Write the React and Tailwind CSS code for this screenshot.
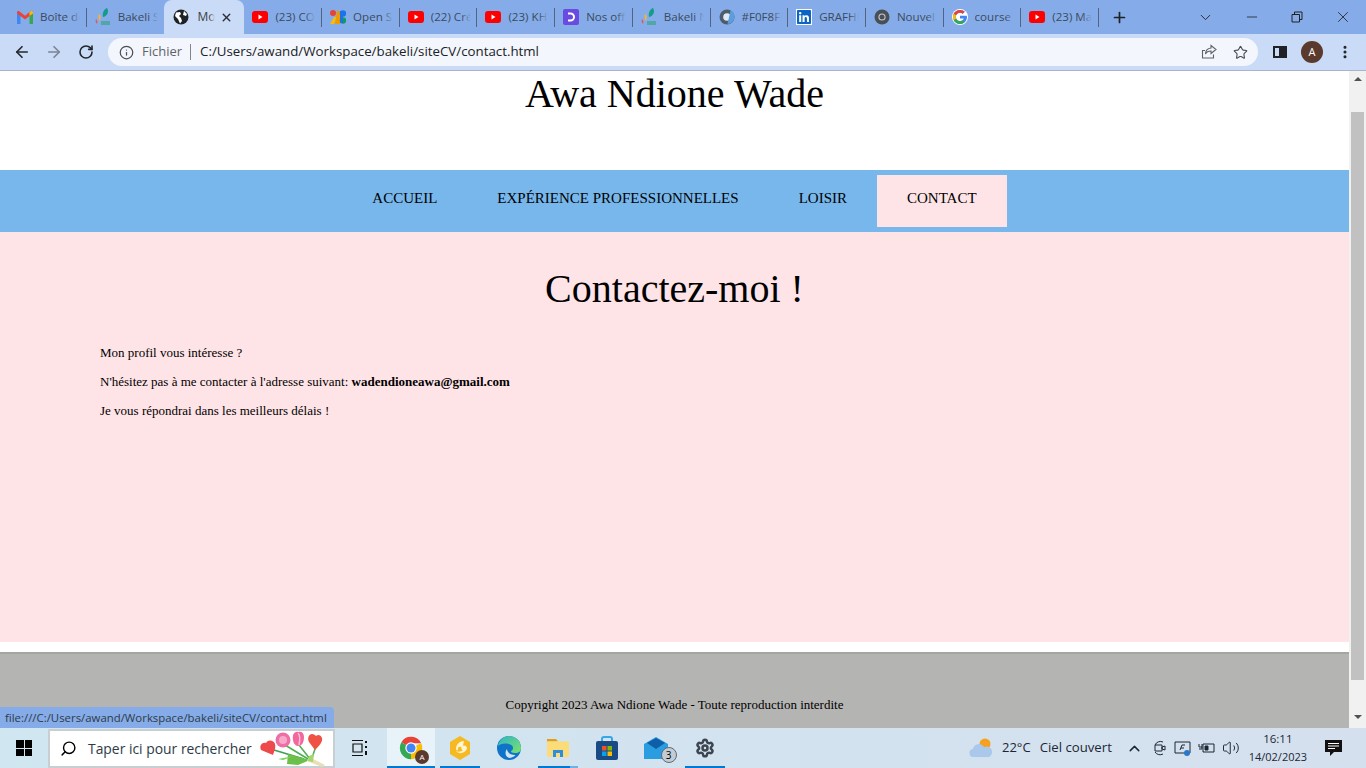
import React from "react";
import { FaLinkedin } from "react-icons/fa";
import { ArrowLeft, ArrowRight, RotateCw, Info, Star, Plus, X, ChevronDown, ChevronUp, Minus, Search, EllipsisVertical, Settings, Volume2 } from "lucide-react";

const ui = "font-['Open_Sans','Noto_Sans',sans-serif]";

function Gmail() {
  return (
    <svg width="16" height="13" viewBox="0 0 16 13">
      <path d="M0 2v11h3.500V4.500z" fill="#4285f4" />
      <path d="M16 2v11h-3.500V4.500z" fill="#34a853" />
      <path d="M0 1.500C0 .2 1.500-.4 2.500.4L8 4.800 13.500.4c1-.8 2.500-.2 2.500 1.100v1L12.500 5 8 8.600 3.500 5 0 2.500z" fill="#ea4335" />
      <path d="M12.500 1.600 13.500.4c1-.8 2.500-.2 2.500 1.100v1L12.500 5z" fill="#fbbc04" />
    </svg>
  );
}

function Bakeli() {
  return (
    <svg width="16" height="20" viewBox="0 0 16 20">
      <path d="M8 10C7 6 9 2 12 1c2 3 1 8-4 9z" fill="#139c8c" />
      <path d="M4 7c2 1 2 4 1 7-2-2-2-5-1-7z" fill="#f2b43a" />
      <path d="M1 12c1 1 2 3 1 5-1-1-2-3-1-5z" fill="#e2574c" />
      <path d="M6 14h9v4H6z" fill="#3aa58c" opacity="0.7" />
    </svg>
  );
}

function Globe() {
  return (
    <svg width="16" height="16" viewBox="0 0 16 16">
      <circle cx="8" cy="8" r="7.500" fill="#1f2328" />
      <path d="M3 3.500 7 3l1 2-2 2 2 2 1 3-2 2.500L5 10 2 7zM11 2l3 3-1 2-3-1z" fill="#fff" />
    </svg>
  );
}

function Youtube() {
  return (
    <svg width="16" height="12" viewBox="0 0 16 12">
      <rect width="16" height="12" rx="3" fill="#f00" />
      <path d="M6.500 3.500v5l4-2.500z" fill="#fff" />
    </svg>
  );
}

function OpenS() {
  return (
    <svg width="16" height="14" viewBox="0 0 16 14">
      <circle cx="3" cy="3" r="3" fill="#e94235" />
      <path d="M0 14 4 7h3l-3 7z" fill="#fbbc04" />
      <path d="M7 1h3v13H5z" fill="#f29900" />
      <circle cx="13" cy="3.500" r="3.200" fill="#1a73e8" />
      <circle cx="13" cy="10.500" r="3.200" fill="#0f9d58" />
      <path d="M10 1h3v12h-3z" fill="#1a73e8" />
    </svg>
  );
}

function Nos() {
  return (
    <svg width="16" height="16" viewBox="0 0 16 16">
      <rect width="16" height="16" rx="2" fill="#6a4be0" />
      <path d="M5 3.500h2.500a4.500 4.500 0 0 1 0 9H5v-2h2.500a2.500 2.500 0 0 0 0-5H5z" fill="#fff" />
    </svg>
  );
}

function Hex() {
  return (
    <svg width="16" height="16" viewBox="0 0 16 16">
      <circle cx="8" cy="8" r="7.500" fill="#4e5b6a" />
      <circle cx="8" cy="8" r="3.800" fill="#dfe8f6" />
      <path d="M8.500 15 11.500 1.500c3 1 4 4 4 6.500 0 3.500-3 7-7 7z" fill="#5a9ee0" />
    </svg>
  );
}

function Chrome({ size = 16, grey }) {
  if (grey) {
    return (
      <svg width={size} height={size} viewBox="0 0 16 16">
        <circle cx="8" cy="8" r="7.500" fill="#4a4f55" />
        <circle cx="8" cy="8" r="3.600" fill="#c3cad4" />
        <circle cx="8" cy="8" r="2.500" fill="#4a4f55" />
      </svg>
    );
  }
  return (
    <svg width={size} height={size} viewBox="0 0 16 16">
      <path d="M8 8 1.600 4.200A7.500 7.500 0 0 1 14.800 4.800H8z" fill="#ea4335" />
      <path d="M8 8 14.800 4.800A7.500 7.500 0 0 1 8 15.500z" fill="#fbbc04" />
      <path d="M8 8v7.500A7.500 7.500 0 0 1 1.600 4.200z" fill="#34a853" />
      <circle cx="8" cy="8" r="3.800" fill="#fff" />
      <circle cx="8" cy="8" r="3" fill="#4285f4" />
    </svg>
  );
}

function Google() {
  return (
    <svg width="16" height="16" viewBox="0 0 48 48" className="rounded-full bg-white">
      <path d="M43.600 20H24v8.500h11.200C34 33.500 29.600 36.500 24 36.500c-6.900 0-12.500-5.600-12.500-12.500S17.100 11.500 24 11.500c3.100 0 6 1.100 8.200 3l6-6C34.500 5.100 29.500 3 24 3 12.400 3 3 12.400 3 24s9.400 21 21 21 21-9.400 21-21c0-1.400-.2-2.700-1.400-4z" fill="#4285f4" />
      <path d="M5 14l7 5c1.900-4.500 6.500-7.500 12-7.500 3.100 0 6 1.100 8.200 3l6-6C34.500 5.100 29.500 3 24 3 15.900 3 8.900 7.500 5 14z" fill="#ea4335" />
      <path d="M24 45c5.400 0 10.300-2 14-5.400l-6.500-5.500c-2 1.500-4.600 2.400-7.500 2.400-5.400 0-10-3.500-11.700-8.300l-7 5.400C8.700 40.400 15.800 45 24 45z" fill="#34a853" />
      <path d="M12.300 28.700a12.600 12.600 0 0 1 0-9.500l-7-5.300a21 21 0 0 0 0 20.200z" fill="#fbbc04" />
    </svg>
  );
}

const tabs = [
  { icon: <Gmail />, label: "Boîte de réception" },
  { icon: <Bakeli />, label: "Bakeli SI" },
  { icon: <Globe />, label: "Mon CV", active: true },
  { icon: <Youtube />, label: "(23) CODE" },
  { icon: <OpenS />, label: "Open Sans" },
  { icon: <Youtube />, label: "(22) Créer" },
  { icon: <Youtube />, label: "(23) KHALIL" },
  { icon: <Nos />, label: "Nos offres" },
  { icon: <Bakeli />, label: "Bakeli Nos" },
  { icon: <Hex />, label: "#F0F8FF" },
  { icon: <FaLinkedin className="bg-white text-[#0a66c2]" size={16} />, label: "GRAFHIC" },
  { icon: <Chrome grey />, label: "Nouvel" },
  { icon: <Google />, label: "course" },
  { icon: <Youtube />, label: "(23) Ma" },
];

function Tab({ tab, hideDivider }) {
  if (tab.active) {
    return (
      <div className="relative flex h-[34px] w-[80px] shrink-0 items-center rounded-t-[8px] bg-[#c9dbf7] pl-[9px]">
        <span className="flex w-[16px] justify-center">{tab.icon}</span>
        <span className="relative ml-[8px] w-[18px] overflow-hidden whitespace-nowrap text-[12px] text-[#3c4043]">
          Mon CV
          <span className="absolute right-0 top-0 h-full w-[6px] bg-gradient-to-r from-transparent to-[#c9dbf7]" />
        </span>
        <X size={13} strokeWidth={2.6} className="ml-[5px] text-[#2b2f33]" />
      </div>
    );
  }
  return (
    <div className="relative flex h-[34px] w-[77.7px] shrink-0 items-center pl-[8px]">
      <span className="flex w-[16px] justify-center">{tab.icon}</span>
      <span className="relative ml-[7px] w-[40px] overflow-hidden whitespace-nowrap text-[11.600px] text-[#3c4a5e]">
        {tab.label}
        <span className="absolute right-0 top-0 h-full w-[10px] bg-gradient-to-r from-transparent to-[#85ace8]" />
      </span>
      {!hideDivider && <span className="absolute right-0 top-[8px] h-[19px] w-px bg-[#54647e]" />}
    </div>
  );
}

function Toolbar() {
  return (
    <div className={`flex h-[36px] shrink-0 items-center bg-[#c9dbf7] ${ui}`}>
      <ArrowLeft size={18} strokeWidth={2.2} className="ml-[13px] text-[#23272c]" />
      <ArrowRight size={18} strokeWidth={2.2} className="ml-[14px] text-[#7b8592]" />
      <RotateCw size={16} strokeWidth={2.4} className="ml-[15px] text-[#23272c]" />
      <div className="ml-[14px] flex h-[28px] w-[1150px] items-center rounded-full bg-[#f3f7fd]">
        <Info size={15} className="ml-[11px] text-[#4a4f55]" />
        <span className="ml-[8px] text-[13px] text-[#5f6368]">Fichier</span>
        <span className="ml-[8px] h-[16px] w-px bg-[#80868b]" />
        <span className="ml-[9px] text-[13.300px] text-[#202124]">C:/Users/awand/Workspace/bakeli/siteCV/contact.html</span>
        <svg width="16" height="16" viewBox="0 0 16 16" fill="none" stroke="#5f6368" strokeWidth="1.100" className="ml-auto">
          <path d="M10 1.500 15 5.500 10 9.500V7C7 7 5.500 8 4.500 10c0-3.500 2-5.500 5.500-6zM12.500 10.500V14h-11V6.500H4" />
        </svg>
        <Star size={15} strokeWidth={1.800} className="ml-[16px] mr-[10px] text-[#4a4f55]" />
      </div>
      <div className="ml-[15px] flex h-[12px] w-[14px] justify-end border-2 border-[#202124]">
        <span className="h-full w-[6px] bg-[#202124]" />
      </div>
      <div className="ml-[14px] flex h-[22px] w-[22px] items-center justify-center rounded-full bg-[#5b3a2e] text-[11px] text-white">A</div>
      <EllipsisVertical size={16} strokeWidth={2.6} className="ml-[14px] text-[#202124]" />
    </div>
  );
}

function PageContent() {
  const serif = "font-['Liberation_Serif','Times_New_Roman',serif] text-black";
  const link = "h-[52px] px-[30px] pt-[14px] leading-[18px]";
  return (
    <div className={`min-w-0 flex-1 overflow-hidden bg-white ${serif}`}>
      <h1 className="h-[99px] text-center text-[40px] leading-[46px]">Awa Ndione Wade</h1>
      <nav className="flex h-[62px] justify-center bg-[#78b7ec] pt-[5px] text-[15px]">
        <a className={link}>ACCUEIL</a>
        <a className={link}>EXPÉRIENCE PROFESSIONNELLES</a>
        <a className={link}>LOISIR</a>
        <a className={`${link} bg-[#ffe4e7]`}>CONTACT</a>
      </nav>
      <section className="h-[410px] bg-[#ffe4e7] px-[100px] pt-[34px] text-[13px]">
        <h2 className="-mx-[100px] mb-[34px] text-center text-[40px] leading-[46px]">Contactez-moi !</h2>
        <p className="leading-[14px]">Mon profil vous intéresse ?</p>
        <p className="mt-[15px] leading-[14px]">N'hésitez pas à me contacter à l'adresse suivant: <strong>wadendioneawa@gmail.com</strong></p>
        <p className="mt-[15px] leading-[14px]">Je vous répondrai dans les meilleurs délais !</p>
      </section>
      <footer className="mt-[10px] h-[90px] border-t-2 border-[#a5a5a3] bg-[#b4b4b2] pt-[44px] text-center text-[13px] leading-[14px]">
        Copyright 2023 Awa Ndione Wade - Toute reproduction interdite
      </footer>
    </div>
  );
}

function Scrollbar() {
  return (
    <div className="flex w-[17px] shrink-0 flex-col items-center bg-[#f1f1f1]">
      <div className="mt-[6px] h-0 w-0 border-x-[4px] border-b-[4px] border-x-transparent border-b-[#505050]" />
      <div className="mt-[31px] h-[568px] w-[13px] bg-[#c1c1c1]" />
      <div className="mt-[35px] h-0 w-0 border-x-[4px] border-t-[4px] border-x-transparent border-t-[#505050]" />
    </div>
  );
}

function Bouquet() {
  return (
    <svg width="66" height="38" viewBox="5 4 66 38" className="ml-[7px]">
      <path d="M20 25 50 34" stroke="#3f9d55" strokeWidth="1.500" fill="none" />
      <path d="M31 20 54 34M45 20 56 34M61 24 58 33" stroke="#4caf50" strokeWidth="1.500" fill="none" />
      <path d="M34 29 56 35 44 40 33 39z" fill="#6cc04a" />
      <path d="M24 34 40 31 29 35z" fill="#7bcf5a" />
      <path d="M55 32 71 40 68 42 53 36z" fill="#e8dfb4" />
      <path d="M55 31 60 29 59 37 54 36z" fill="#a5d66b" />
      <path d="M19 30 7 25c-2-4 1-8 5-7 2-4 8-3 9 1 1 4-1 8-2 11z" fill="#ee4a4b" />
      <circle cx="29" cy="15" r="7.500" fill="#ee6fa6" />
      <circle cx="29" cy="15" r="4" fill="#f6a9c8" />
      <path d="M39 10c1-3 4-4 6-3 3-1 5 2 5 5 0 5-2 9-6 9-3 0-6-4-5-11z" fill="#f2679d" />
      <path d="M44 8c2 2 2 7 1 12" stroke="#fbc2d8" strokeWidth="1.500" fill="none" />
      <path d="M61 25 55 17c-2-4 0-8 3-8 2 0 3 1 4 2 2-2 5-1 6 2 1 4-3 8-7 12z" fill="#ef5245" />
    </svg>
  );
}

function TaskSlot({ children, line, active, wide, split }) {
  return (
    <div className={`relative flex h-[40px] items-center justify-center ${wide ? "w-[48px]" : "w-[49px]"} ${active ? "bg-[#e8f3f9]" : ""}`}>
      {children}
      {line && <span className={`absolute bottom-0 h-[2px] bg-[#0078d4] ${active ? "inset-x-0" : "w-[40px]"}`} />}
      {split && <span className="absolute bottom-0 right-[4px] h-[2px] w-[8px] bg-[#6fb1e6]" />}
    </div>
  );
}

function Taskbar() {
  return (
    <div className={`flex h-[40px] shrink-0 items-center bg-gradient-to-r from-[#d0e6f1] to-[#d5e0ee] text-[#1c2733] ${ui}`}>
      <div className="ml-[16px] grid h-[16px] w-[16px] grid-cols-2 gap-[1px]">
        <span className="bg-black" />
        <span className="bg-black" />
        <span className="bg-black" />
        <span className="bg-black" />
      </div>
      <div className="ml-[16px] flex h-[39px] w-[287px] items-center border-2 border-[#c9ced2] bg-white">
        <Search size={17} className="ml-[10px] -scale-x-100 text-black" />
        <span className="ml-[11px] pt-[2px] text-[13.900px] text-[#2e3a46]">Taper ici pour rechercher</span>
        <Bouquet />
      </div>
      <svg width="18" height="18" viewBox="0 0 18 18" fill="none" stroke="#111" strokeWidth="1.200" className="ml-[16px]">
        <path d="M1 1.500h11M1 16.500h11M2 5h9v8H2z" />
        <path d="M15 2v2M15 7v2M15 12v4" strokeWidth="2" />
      </svg>
      <div className="ml-[18px] flex">
        <TaskSlot line active wide>
          <div className="relative">
            <Chrome size={24} />
            <span className="absolute -bottom-[4px] -right-[6px] flex h-[14px] w-[14px] items-center justify-center rounded-full bg-[#5b3a2e] text-[8px] text-white">A</span>
          </div>
        </TaskSlot>
        <TaskSlot line>
          <svg width="20" height="24" viewBox="0 0 20 24">
            <path d="M10 0 20 6v12l-10 6L0 18V6z" fill="#f6b921" />
            <path d="M14 5c-4 0-8 3-8 8 0 1 1 2 2 1-1-3 2-4 3-3s0 3 2 3c-2 2-5 2-7 1 3 4 10 2 11-3 0-2-3-3-4-2 0-2 1-4 1-5z" fill="#fff5cf" />
          </svg>
        </TaskSlot>
        <TaskSlot>
          <svg width="24" height="24" viewBox="0 0 24 24">
            <defs>
              <linearGradient id="edgeA" x1="0" y1="0" x2="1" y2="1">
                <stop offset="0" stopColor="#2fb3c4" />
                <stop offset="1" stopColor="#7be36a" />
              </linearGradient>
            </defs>
            <circle cx="12" cy="12" r="12" fill="#0f74c9" />
            <path d="M1 10C2 4 7 0 12 0c7 0 12 5 12 12 0 3-2 5-6 5-3 0-4-1-4-2 3-1 3-6-2-7C7 7 3 8 1 10z" fill="url(#edgeA)" />
            <path d="M10 13c0 3 3 6 8 6 1 0-1 2-5 3-4 0-6-5-3-9z" fill="#d4e5ef" />
          </svg>
        </TaskSlot>
        <TaskSlot line split>
          <svg width="22" height="18" viewBox="0 0 22 18">
            <path d="M0 0h9l2 2.500H0z" fill="#dfa012" />
            <rect x="0" y="2.500" width="22" height="15.500" rx="1" fill="#fbdc78" />
            <path d="M6 11h10v7h-3v-4H9v4H6z" fill="#2d8fdc" />
          </svg>
        </TaskSlot>
        <TaskSlot>
          <svg width="24" height="24" viewBox="0 0 24 24">
            <path d="M7 6V3a2 2 0 0 1 2-2h6a2 2 0 0 1 2 2v3" stroke="#35a7e8" strokeWidth="2" fill="none" />
            <rect x="1" y="5" width="22" height="19" rx="2" fill="#1b4b85" />
            <path d="M7 10h4.500v4.500H7z" fill="#f25022" />
            <path d="M12.500 10H17v4.500h-4.500z" fill="#7fba00" />
            <path d="M7 15.500h4.500V20H7z" fill="#00a4ef" />
            <path d="M12.500 15.500H17V20h-4.500z" fill="#ffb900" />
          </svg>
        </TaskSlot>
        <TaskSlot>
          <div className="relative">
            <svg width="24" height="22" viewBox="0 0 24 22">
              <path d="M0 7 12 0l12 7v15H0z" fill="#2a9ce0" />
              <path d="M3 6 12 1l9 5-9 6z" fill="#0f5ea8" />
            </svg>
            <span className="absolute -bottom-[4px] -right-[9px] flex h-[16px] w-[16px] items-center justify-center rounded-full border border-[#5f6a74] bg-[#c3ccd4] text-[10px] text-black">3</span>
          </div>
        </TaskSlot>
        <TaskSlot line>
          <Settings size={20} strokeWidth={3} className="text-[#3d4650]" />
        </TaskSlot>
      </div>
      <svg width="25" height="20" viewBox="0 0 25 20" className="ml-[240px]">
        <circle cx="16" cy="6" r="5.500" fill="#f6a01e" />
        <path d="M5 19a4 4 0 0 1-1-8 6 6 0 0 1 11-2 5 5 0 0 1 5 10z" fill="#a9c8ec" />
      </svg>
      <span className="ml-[8px] text-[13px]">22°C</span>
      <span className="ml-[9px] text-[13.200px]">Ciel couvert</span>
      <ChevronUp size={17} className="ml-[14px]" />
      <svg width="14" height="18" viewBox="0 0 14 18" fill="none" stroke="#1c2733" className="ml-[10px]">
        <path d="M2 6a6 6 0 0 1 8-3M2 13a6 6 0 0 0 8 2M2 6h7v6H2zM9 8l3-1v4l-3-1z" />
      </svg>
      <svg width="17" height="16" viewBox="0 0 17 16" fill="none" stroke="#1c2733" className="ml-[7px]">
        <path d="M1 2h15v11H1zM6 10l2-5h3M7 8h3" />
        <circle cx="13" cy="13" r="3" fill="#2a77c9" stroke="none" />
      </svg>
      <svg width="17" height="12" viewBox="0 0 17 12" fill="none" stroke="#1c2733" className="ml-[7px]">
        <path d="M5 2h11v8H5zM1 2v3M4 2v3M1 5h3v2H1" />
        <path d="M7 4h3v4H7z" fill="#1c2733" />
      </svg>
      <Volume2 size={18} strokeWidth={1.300} className="ml-[7px]" />
      <div className="ml-[9px] flex w-[58px] flex-col items-center text-[11px] leading-[18px]">
        <span className="text-[11.500px]">16:11</span>
        <span>14/02/2023</span>
      </div>
      <svg width="17" height="17" viewBox="0 0 17 17" className="ml-[18px]">
        <path d="M0 0h17v12H9l-4 4v-4H0z" fill="#111" />
        <path d="M3 3.500h11M3 6h11M3 8.500h7" stroke="#fff" />
      </svg>
    </div>
  );
}

export default function App() {
  return (
    <div className={`relative flex h-[768px] w-[1366px] flex-col overflow-hidden ${ui}`}>
      <div className="flex h-[34px] shrink-0 items-center bg-[#85ace8]">
        <div className="flex pl-[9px]">
          {tabs.map((t, i) => (
            <Tab key={i} tab={t} hideDivider={i === 1} />
          ))}
        </div>
        <Plus size={17} strokeWidth={2.4} className="ml-[12px] text-[#202124]" />
        <ChevronDown size={17} strokeWidth={1.300} className="ml-[69px] text-[#202124]" />
        <Minus size={16} strokeWidth={1.200} className="ml-[30px] text-[#202124]" />
        <svg width="12" height="12" viewBox="0 0 12 12" fill="none" stroke="#202124" className="ml-[31px]">
          <path d="M1 3.500h7.500V11H1zM3.500 3.500V1H11v7.500H8.500" />
        </svg>
        <X size={18} strokeWidth={1.100} className="ml-[31px] text-[#202124]" />
      </div>
      <Toolbar />
      <div className="flex min-h-0 flex-1 border-t border-[#a9b4cc]">
        <PageContent />
        <Scrollbar />
      </div>
      <Taskbar />
      <div className="absolute bottom-[40px] left-0 flex h-[21px] w-[334px] items-center rounded-tr-[4px] bg-[#85ace8] pl-[5px] text-[11.400px] text-[#2e3a46]">
        file:///C:/Users/awand/Workspace/bakeli/siteCV/contact.html
      </div>
    </div>
  );
}
